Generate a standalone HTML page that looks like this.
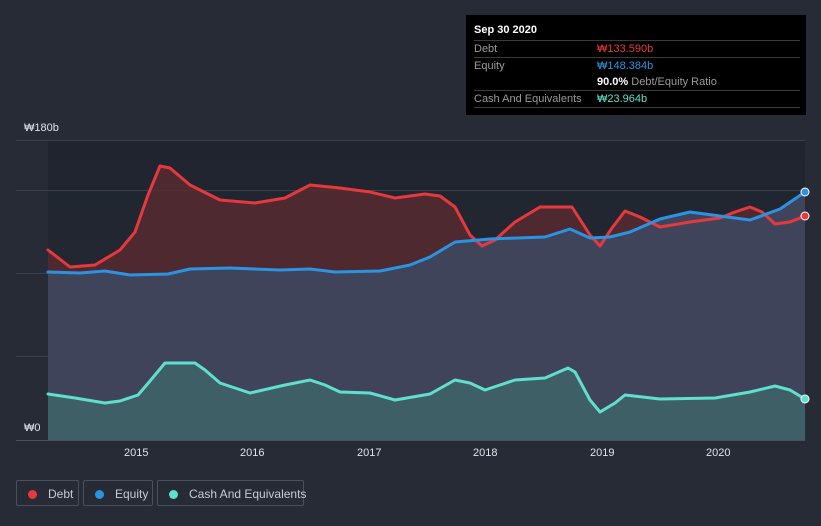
<!DOCTYPE html>
<html><head><meta charset="utf-8"><style>
body{margin:0;width:821px;height:526px;background:#262b36;font-family:"Liberation Sans","Noto Sans CJK KR",sans-serif;overflow:hidden;position:relative}
.tt{position:absolute;left:466px;top:15px;width:340px;height:100px;background:#000;color:#fff;font-size:11px}
.tt .r{position:absolute;left:8px;right:6px;border-top:1px solid #3a3a3a;height:17px;line-height:17px;color:#9a9a9a;white-space:nowrap}
.tt .v{position:absolute;left:123px}
.lg{position:absolute;top:480px;height:26px;border:1px solid #4a505c;border-radius:2px;color:#c8ccd2;font-size:12px;line-height:26px;box-sizing:border-box;white-space:nowrap}
.lg i{display:inline-block;width:9px;height:9px;border-radius:50%;margin:0 11px 0 11px;vertical-align:-1px}
.ax{position:absolute;color:#e0e3e8;font-size:11px}
</style></head><body>
<svg width="821" height="526" style="position:absolute;left:0;top:0">
<defs><linearGradient id="bg" x1="0" y1="0" x2="0" y2="1"><stop offset="0" stop-color="#1f242e"/><stop offset="1" stop-color="#272c38"/></linearGradient></defs>
<rect x="48" y="140" width="757" height="300" fill="url(#bg)"/>
<g stroke="#3b404c" stroke-width="1">
<line x1="16" y1="140.5" x2="805" y2="140.5"/><line x1="16" y1="190.5" x2="805" y2="190.5"/><line x1="16" y1="273.5" x2="805" y2="273.5"/><line x1="16" y1="356.5" x2="805" y2="356.5"/><line x1="16" y1="440.5" x2="805" y2="440.5" stroke="#4a505c"/></g>
<path d="M48,250 L70,267 95,265 120,250 135,232 148,195 160,166 170,168 190,185 220,200 255,203 285,198 310,185 340,188 370,192 395,198 425,194 440,196 455,207 470,235 482,246 495,240 515,222 540,207 572,207 590,235 600,246 612,228 625,211 640,217 660,227 690,222 720,218 735,212 750,207 762,212 775,224 790,222 805,216 L805,440 L48,440Z" fill="#5a2a30" opacity="0.8"/>
<path d="M48,272 L80,273 105,271 130,275 168,274 190,269 230,268 280,270 310,269 335,272 380,271 410,265 430,257 455,242 490,239 545,237 570,229 590,238 610,237 630,232 660,219 690,212 720,216 750,220 780,209 805,192 L805,440 L48,440Z" fill="#40445a"/>
<path d="M48,394 L75,398 105,403 120,401 138,395 150,381 165,363 195,363 205,370 220,383 250,393 285,385 310,380 325,385 340,392 370,393 395,400 430,394 455,380 470,383 485,390 500,385 515,380 545,378 568,368 575,372 590,400 600,412 615,403 625,395 660,399 715,398 750,392 775,386 790,390 805,399 L805,440 L48,440Z" fill="#3f5f66"/>
<g fill="none" stroke-width="3" stroke-linejoin="round" stroke-linecap="round">
<path stroke="#e5393d" d="M48,250 L70,267 95,265 120,250 135,232 148,195 160,166 170,168 190,185 220,200 255,203 285,198 310,185 340,188 370,192 395,198 425,194 440,196 455,207 470,235 482,246 495,240 515,222 540,207 572,207 590,235 600,246 612,228 625,211 640,217 660,227 690,222 720,218 735,212 750,207 762,212 775,224 790,222 805,216"/>
<path stroke="#2b93e0" d="M48,272 L80,273 105,271 130,275 168,274 190,269 230,268 280,270 310,269 335,272 380,271 410,265 430,257 455,242 490,239 545,237 570,229 590,238 610,237 630,232 660,219 690,212 720,216 750,220 780,209 805,192"/>
<path stroke="#5fe0cc" d="M48,394 L75,398 105,403 120,401 138,395 150,381 165,363 195,363 205,370 220,383 250,393 285,385 310,380 325,385 340,392 370,393 395,400 430,394 455,380 470,383 485,390 500,385 515,380 545,378 568,368 575,372 590,400 600,412 615,403 625,395 660,399 715,398 750,392 775,386 790,390 805,399"/>
</g>
<circle cx="805" cy="216" r="4" fill="#e5393d" stroke="#fff" stroke-width="1"/>
<circle cx="805" cy="192" r="4" fill="#2b93e0" stroke="#fff" stroke-width="1"/>
<circle cx="805" cy="399" r="4" fill="#5fe0cc" stroke="#fff" stroke-width="1"/>
</svg>
<div class="ax" style="left:24px;top:122px">₩180b</div>
<div class="ax" style="left:24px;top:422px">₩0</div>
<div class="ax" style="left:124px;top:447px">2015</div>
<div class="ax" style="left:240px;top:447px">2016</div>
<div class="ax" style="left:357px;top:447px">2017</div>
<div class="ax" style="left:473px;top:447px">2018</div>
<div class="ax" style="left:590px;top:447px">2019</div>
<div class="ax" style="left:706px;top:447px">2020</div>
<div class="tt">
<div style="position:absolute;left:8px;top:9px;font-weight:bold">Sep 30 2020</div>
<div class="r" style="top:25px">Debt<span class="v" style="color:#e5393d">₩133.590b</span></div>
<div class="r" style="top:42px">Equity<span class="v" style="color:#2b93e0">₩148.384b</span></div>
<div class="r" style="top:59px;border-top:none"><span class="v" style="color:#9a9a9a"><b style="color:#fff">90.0%</b> Debt/Equity Ratio</span></div>
<div class="r" style="top:75px">Cash And Equivalents<span class="v" style="color:#5fe0cc">₩23.964b</span></div>
<div style="position:absolute;left:8px;right:6px;top:92px;border-top:1px solid #3a3a3a"></div>
</div>
<div class="lg" style="left:16px;width:63px"><i style="background:#e5393d"></i>Debt</div>
<div class="lg" style="left:83px;width:70px"><i style="background:#2b93e0"></i>Equity</div>
<div class="lg" style="left:157px;width:147px"><i style="background:#5fe0cc"></i>Cash And Equivalents</div>
</body></html>
